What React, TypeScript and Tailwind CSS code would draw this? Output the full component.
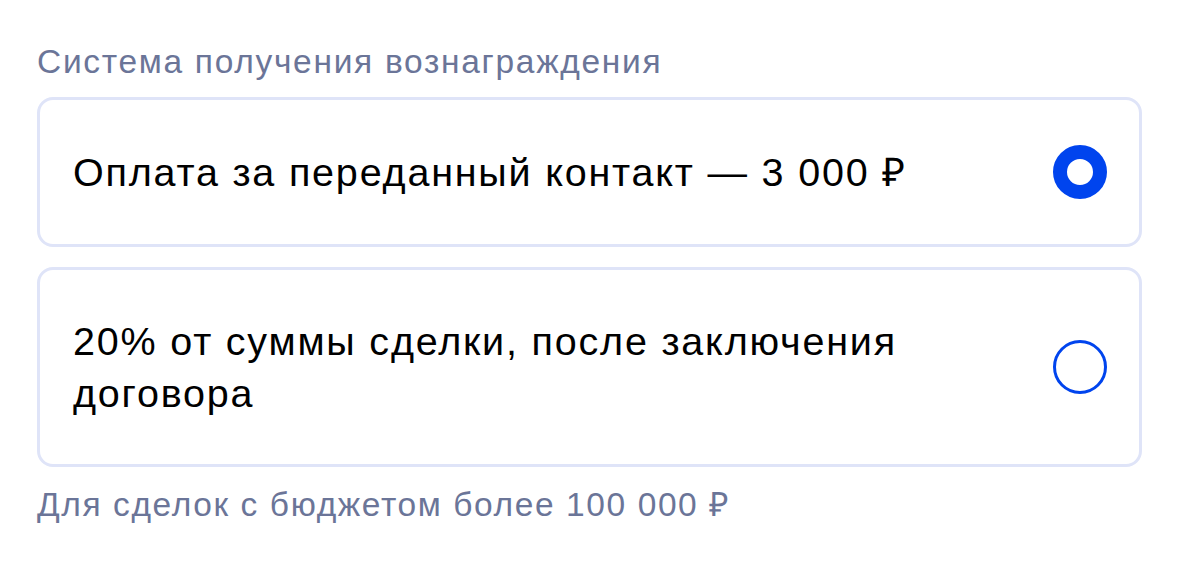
import { useState } from 'react';

const OPTIONS = [
  { id: 'contact', label: 'Оплата за переданный контакт — 3 000 ₽' },
  { id: 'percent', label: '20% от суммы сделки, после заключения договора' },
];

function Radio({ checked }: { checked: boolean }) {
  return (
    <span
      className={
        checked
          ? 'shrink-0 w-[54px] h-[54px] rounded-full border-[14px] border-[#0044ee] bg-white'
          : 'shrink-0 w-[54px] h-[54px] rounded-full border-[3px] border-[#0044ee] bg-white'
      }
    />
  );
}

export default function App() {
  const [selected, setSelected] = useState('contact');

  return (
    <div className="w-[1179px] h-[566px] bg-white px-[37px] pt-[42px] font-['Liberation_Sans',Arial,sans-serif]">
      <p className="text-[33.5px] leading-[40px] tracking-[1.7px] text-[#6b7598]">Система получения вознаграждения</p>

      <div className="mt-[15px] flex flex-col gap-[20px]">
        {OPTIONS.map((opt) => (
          <button
            key={opt.id}
            onClick={() => setSelected(opt.id)}
            className="w-[1105px] flex items-center justify-between gap-8 text-left rounded-[16px] border-[3px] border-[#dfe4f8] bg-white pl-[33px] pr-[32px] py-[45px]"
          >
            <span className="max-w-[880px] text-[39.5px] leading-[52px] tracking-[1.8px] text-black">{opt.label}</span>
            <Radio checked={selected === opt.id} />
          </button>
        ))}
      </div>

      <p className="mt-[18px] text-[33.5px] leading-[40px] tracking-[1.6px] text-[#6b7598]">Для сделок с бюджетом более 100 000 ₽</p>
    </div>
  );
}
